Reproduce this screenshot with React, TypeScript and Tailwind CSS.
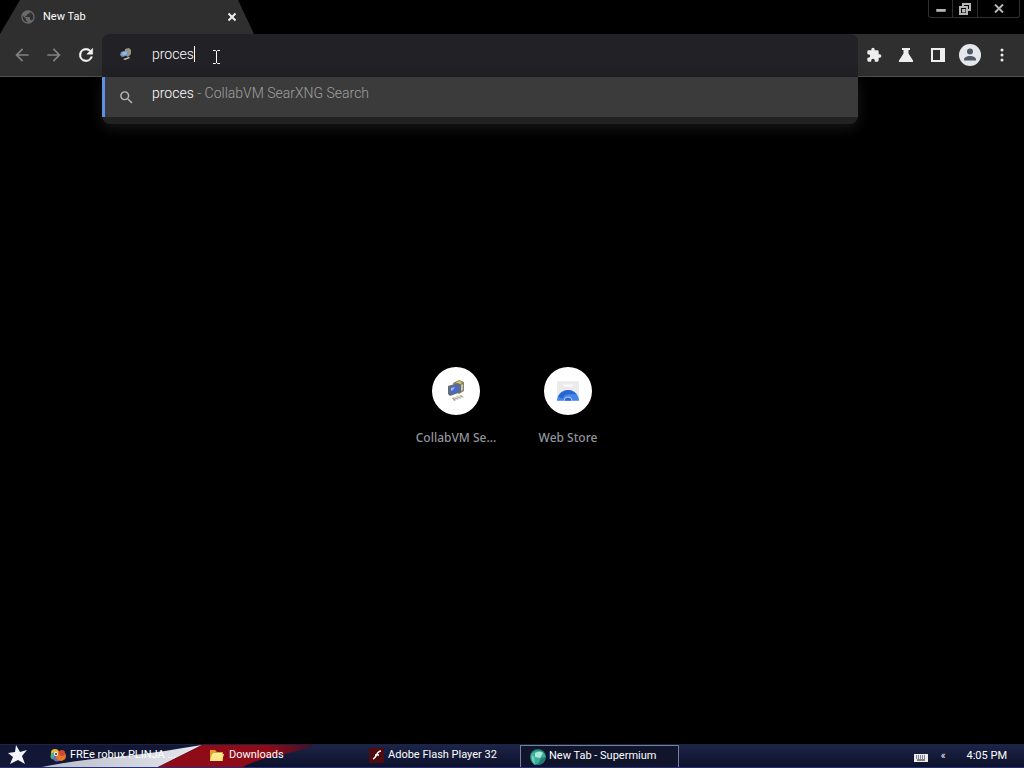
import type { ReactNode } from "react";
import { useState } from "react";

function GlobeIcon() {
  return (
    <svg viewBox="0 0 24 24" className="size-4 shrink-0" fill="#68696b" aria-hidden="true">
      <path d="M12 2C6.48 2 2 6.48 2 12s4.48 10 10 10 10-4.480 10-10S17.520 2 12 2zm-1 17.930c-3.950-.49-7-3.850-7-7.930 0-.62.08-1.210.21-1.790L9 15v1c0 1.100.9 2 2 2v1.930zm6.900-2.540c-.26-.81-1-1.390-1.900-1.390h-1v-3c0-.55-.45-1-1-1H8v-2h2c.55 0 1-.45 1-1V7h2c1.100 0 2-.9 2-2v-.41c2.930 1.190 5 4.060 5 7.410 0 2.080-.8 3.970-2.100 5.390z" />
    </svg>
  );
}

function MachineIcon({ className }: { className: string }) {
  return (
    <svg viewBox="0 0 20 22" className={className} aria-hidden="true">
      <path d="M7 3 L13 0 L18 2 L18 11 L13 14 L9 11Z" fill="#858267" />
      <path d="M10 2 L14 1 L16 3 L12 5Z" fill="#d4c76d" />
      <path d="M2 6 L12 3 L15 5 L15 12 L4 16 L2 14Z" fill="#656b77" />
      <path d="M4 8 L12 5 L13 11 L5 14Z" fill="#456bd2" />
      <path d="M5 8 L9 7 L7 10 L5 11Z" fill="#9bbdf0" />
      <path d="M15 5 L17 4 V10 L15 11Z" fill="#c5c5b6" />
      <path d="M6 18 L15 15 L18 17 L8 21Z" fill="#aaa999" />
      <path d="M8 18 L15 16 M9 20 L17 17" stroke="#e8e6d9" strokeWidth="1" />
    </svg>
  );
}

function SmallMachineIcon() {
  return (
    <svg viewBox="0 0 14 14" className="size-[14px] shrink-0" aria-hidden="true">
      <path d="M6 2 10 1 12 3v4L9 10 6 8z" fill="#9c9873" />
      <path d="M2 5 8 3l2 2v3l-7 2-2-2z" fill="#7e97b8" />
      <path d="M3 5.500 7.500 4.500 8 7 4 8.500z" fill="#8fb9e8" />
      <path d="M4 12 10 10l1 1-5 2z" fill="#c9c9bd" />
    </svg>
  );
}

function StoreIcon() {
  return (
    <svg viewBox="0 0 22 22" className="size-6" aria-hidden="true">
      <path d="M1 2h20v18H1z" fill="#ebebed" />
      <path d="M7 5h8v2H7z" fill="#fafafa" />
      <path d="M1 20a10 10 0 0 1 20 0z" fill="#4386e8" />
      <path d="M2 16a10 10 0 0 1 17-2H11a6 6 0 0 0-5 4z" fill="#2867d2" />
      <path d="M7 20a4 4 0 0 1 8 0z" fill="#b9d4fb" />
      <path d="M8 20a3 3 0 0 1 6 0z" fill="#2767d5" />
    </svg>
  );
}

function IconButton({ label, children }: { label: string; children: ReactNode }) {
  return (
    <button type="button" aria-label={label} className="flex w-8 items-center justify-center">
      {children}
    </button>
  );
}

function TabStrip() {
  return (
    <header className="flex h-[34px] shrink-0 items-start justify-between">
      <div className="flex h-full w-[254px] items-center bg-[#2f2f2f] pr-[14px] pl-5 [clip-path:polygon(20px_0,238px_0,100%_100%,0_100%)]">
        <GlobeIcon />
        <span className="ml-[7px] flex-1 text-[11px] text-white">New Tab</span>
        <button type="button" aria-label="Close tab" className="flex size-4 items-center justify-center">
          <svg viewBox="0 0 10 10" className="size-[10px]" stroke="#eeeeee" strokeWidth="2" aria-hidden="true">
            <path d="M1.500 1.500 8.500 8.500M8.500 1.500 1.500 8.500" />
          </svg>
        </button>
      </div>
      <div className="mr-1 flex h-[18px] rounded-b-[3px] border border-t-0 border-[#303030]">
        <button type="button" aria-label="Minimize" className="flex w-6 justify-center border-r border-[#303030]">
          <svg viewBox="0 0 10 18" className="h-[17px] w-[10px]" aria-hidden="true">
            <path d="M0 9.500h10v3H0z" fill="#b5b5b5" />
          </svg>
        </button>
        <button type="button" aria-label="Restore" className="flex w-6 justify-center pt-[3px]">
          <svg viewBox="0 0 12 12" className="size-3" fill="none" stroke="#b5b5b5" strokeWidth="2" aria-hidden="true">
            <path d="M4 3V1h7v6H9M1 4h7v7H1zM4 7h1.500v1.500H4z" />
          </svg>
        </button>
        <button type="button" aria-label="Close window" className="flex w-[42px] justify-center border-l border-[#303030] pt-1">
          <svg viewBox="0 0 10 9" className="h-[9px] w-[10px]" stroke="#b5b5b5" strokeWidth="2" aria-hidden="true">
            <path d="M1 0.500 9 8.500M9 0.500 1 8.500" />
          </svg>
        </button>
      </div>
    </header>
  );
}

function Omnibox() {
  const [query, setQuery] = useState("proces");
  return (
    <div className="relative z-10 h-[43px] min-w-0 flex-1 rounded-t-lg bg-[#222126]">
      <div className="flex h-full items-center pb-[3px] pl-[17px]">
        <SmallMachineIcon />
        <input
          aria-label="Search or enter address"
          value={query}
          onChange={(event) => setQuery(event.target.value)}
          className="ml-[19px] field-sizing-content bg-transparent p-0 font-[Roboto,sans-serif] text-sm font-light text-white outline-none"
        />
        <span className="h-4 w-px bg-white" />
        <svg viewBox="0 0 7 14" className="mt-[5px] ml-[18px] h-[14px] w-[7px]" fill="none" stroke="#ffffff" aria-hidden="true">
          <path d="M0 .5h2.500l1 1 1-1H7M3.500 1v12M0 13.500h2.500l1-1 1 1H7" />
        </svg>
      </div>
      <div className="absolute inset-x-0 top-full overflow-hidden rounded-b-lg bg-[#222222] pb-[7px] shadow-[0_4px_14px_#181818]">
        <a href="#search" className="flex h-10 items-center border-l-[3px] border-[#5b8fe8] bg-[#3b3b3b] pl-[13px]">
          <svg viewBox="0 0 24 24" className="size-[17px] shrink-0" fill="#b8b8b8" aria-hidden="true">
            <path d="M15.500 14h-.79l-.28-.27A6.470 6.470 0 0 0 16 9.500 6.500 6.500 0 1 0 9.500 16c1.610 0 3.090-.59 4.230-1.570l.27.28v.79l5 4.990L20.490 19l-4.990-5zm-6 0C7.010 14 5 11.990 5 9.500S7.010 5 9.500 5 14 7.010 14 9.500 11.990 14 9.500 14z" />
          </svg>
          <span className="ml-[17px] pb-2 font-[Roboto,sans-serif] text-sm font-light whitespace-pre text-white">
            proces<span className="text-[#a0a0a0]"> - CollabVM SearXNG Search</span>
          </span>
        </a>
      </div>
    </div>
  );
}

function Toolbar() {
  return (
    <nav className="flex h-[43px] shrink-0 border-b border-[#505050] bg-[#2f2f2f]">
      <div className="flex w-[102px] shrink-0 pl-[6px]">
        <IconButton label="Back">
          <svg viewBox="0 0 24 24" className="size-5" fill="#828282" aria-hidden="true">
            <path d="M20 11H7.830l5.590-5.590L12 4l-8 8 8 8 1.410-1.410L7.830 13H20v-2z" />
          </svg>
        </IconButton>
        <IconButton label="Forward">
          <svg viewBox="0 0 24 24" className="size-5" fill="#828282" aria-hidden="true">
            <path d="M12 4l-1.410 1.410L16.170 11H4v2h12.170l-5.580 5.590L12 20l8-8z" />
          </svg>
        </IconButton>
        <IconButton label="Reload">
          <svg viewBox="0 0 24 24" className="size-5" fill="#f4f4f4" stroke="#f4f4f4" strokeWidth=".6" aria-hidden="true">
            <path d="M17.650 6.350A7.960 7.960 0 0 0 12 4a8 8 0 1 0 7.730 10h-2.080A6 6 0 1 1 12 6c1.660 0 3.140.69 4.220 1.780L13 11h7V4l-2.350 2.350z" />
          </svg>
        </IconButton>
      </div>
      <Omnibox />
      <div className="flex w-[166px] shrink-0">
        <IconButton label="Extensions">
          <svg viewBox="0 0 24 24" className="size-4" fill="#eeeeee" aria-hidden="true">
            <path d="M20.500 11H19V7a2 2 0 0 0-2-2h-4V3.500a2.500 2.500 0 0 0-5 0V5H4a2 2 0 0 0-2 2v3.800h1.500a2.700 2.700 0 0 1 0 5.400H2V20a2 2 0 0 0 2 2h3.800v-1.500a2.700 2.700 0 0 1 5.400 0V22H17a2 2 0 0 0 2-2v-4h1.500a2.500 2.500 0 0 0 0-5z" />
          </svg>
        </IconButton>
        <IconButton label="Experiments">
          <svg viewBox="0 0 16 16" className="size-4" fill="#eeeeee" aria-hidden="true">
            <path d="M4 1h8v2h-1.500v3.500L15 13.500c.5 1-.1 1.500-1 1.500H2c-.9 0-1.500-.5-1-1.500l4.500-7V3H4z" />
          </svg>
        </IconButton>
        <IconButton label="Side panel">
          <svg viewBox="0 0 16 16" className="size-4" fill="#eeeeee" aria-hidden="true">
            <path fillRule="evenodd" d="M1 1h14v14H1zM3 3v10h7V3z" />
          </svg>
        </IconButton>
        <IconButton label="Profile">
          <svg viewBox="0 0 22 22" className="size-[22px]" aria-hidden="true">
            <circle cx="11" cy="11" r="11" fill="#e4e7ec" />
            <circle cx="11" cy="7.500" r="3" fill="#505866" />
            <path d="M5 16.500v-1c0-2 3-3.500 6-3.500s6 1.500 6 3.500v1z" fill="#505866" />
          </svg>
        </IconButton>
        <IconButton label="Menu">
          <svg viewBox="0 0 4 14" className="h-[14px] w-1" fill="#eeeeee" aria-hidden="true">
            <circle cx="2" cy="2" r="1.500" />
            <circle cx="2" cy="7" r="1.500" />
            <circle cx="2" cy="12" r="1.500" />
          </svg>
        </IconButton>
      </div>
    </nav>
  );
}

function Shortcut({ label, children }: { label: string; children: ReactNode }) {
  return (
    <a href="#shortcut" className="flex w-28 flex-col items-center gap-[13px]">
      <span className="flex size-12 items-center justify-center rounded-full bg-white">{children}</span>
      <span className="text-center font-['Noto_Sans',sans-serif] text-xs leading-5 font-medium text-[#92959a]">{label}</span>
    </a>
  );
}

function Task({ label, icon, active = false }: { label: string; icon: ReactNode; active?: boolean }) {
  return (
    <button
      type="button"
      className={`flex w-[159px] min-w-0 items-center overflow-hidden text-left text-[11px] whitespace-nowrap text-white ${
        active ? "gap-[3px] border-x border-t border-[#7380a0] bg-[#10152c] pl-[9px]" : "gap-1 pb-[2px] pl-[7px]"
      }`}
    >
      {icon}
      <span>{label}</span>
    </button>
  );
}

function Taskbar() {
  return (
    <footer className="relative flex h-6 shrink-0 overflow-hidden border-y border-t-[#1c2342] border-b-[#262f77] bg-linear-to-b from-[#1c2449] to-[#0c1129]">
      <svg viewBox="0 0 340 22" className="absolute top-0 left-0 h-[22px] w-[340px]" aria-hidden="true">
        <defs>
          <linearGradient id="stripe-red" x1="0" x2="1">
            <stop offset="0" stopColor="#8e0b17" />
            <stop offset=".7" stopColor="#8e0b17" />
            <stop offset="1" stopColor="#3c1028" />
          </linearGradient>
          <linearGradient id="stripe-white" x1="0" x2="1">
            <stop offset="0" stopColor="#b9bdc9" />
            <stop offset="1" stopColor="#e6e7ed" />
          </linearGradient>
        </defs>
        <path d="M0 0h200L44 22H0z" fill="#111735" />
        <path d="M42 22C72 16 91 14 125 11 155 8 176 4 202 0L158 22z" fill="url(#stripe-white)" />
        <path d="M202 0h114C285 11 262 11 243 22H158z" fill="url(#stripe-red)" />
      </svg>
      <div className="relative flex min-w-0 flex-1">
        <button type="button" aria-label="Start" className="flex w-[43px] shrink-0 items-center pb-[3px] pl-[7px]">
          <svg viewBox="0 0 22 22" className="size-[22px]" fill="#f4f4ff" aria-hidden="true">
            <path d="M9 1 13 8 20 6 15 12 18 20 11 16 3 20 6 13 1 9 8 8z" />
          </svg>
        </button>
        <Task
          label="FREe robux PLINJA ..."
          icon={
            <svg viewBox="0 0 16 16" className="size-4 shrink-0" aria-hidden="true">
              <circle cx="5" cy="6" r="4" fill="#edb834" />
              <circle cx="4" cy="9" r="3.500" fill="#4dae83" />
              <circle cx="7" cy="11" r="3.500" fill="#7664c4" />
              <circle cx="11" cy="9" r="5" fill="#e67824" />
              <circle cx="12" cy="6" r="3" fill="#d34631" />
              <circle cx="6" cy="7" r="2" fill="#ffffff" />
              <circle cx="6" cy="7" r="1" fill="#202020" />
            </svg>
          }
        />
        <Task
          label="Downloads"
          icon={
            <svg viewBox="0 0 16 16" className="size-4 shrink-0" aria-hidden="true">
              <path d="M1 3h5l2 2h6v9H1z" fill="#d9a52d" />
              <path d="M3 7h12l-2 7H1z" fill="#ffe78a" />
              <path d="M4 6h9v1H4z" fill="#fff6bd" />
            </svg>
          }
        />
        <Task
          label="Adobe Flash Player 32"
          icon={
            <svg viewBox="0 0 16 16" className="size-4 shrink-0" aria-hidden="true">
              <path d="M1 1h15v15H1z" fill="#500b10" />
              <path d="M13 4c-5 0-4 7-8 8M7 8h4" fill="none" stroke="#ffffff" strokeWidth="1.500" />
            </svg>
          }
        />
        <Task
          active
          label="New Tab - Supermium"
          icon={
            <svg viewBox="0 0 16 16" className="size-4 shrink-0" aria-hidden="true">
              <circle cx="8" cy="8" r="8" fill="#237b73" />
              <path d="M1 5Q6-1 13 3l3 5-5 1-2 5-4 2Q0 13 1 5z" fill="#3eae9a" />
              <path d="M5 4q5-3 8 0l-3 5-5-1z" fill="#a5e9d6" />
              <path d="M2 6v5l3 4-1-7z" fill="#71d5be" />
            </svg>
          }
        />
      </div>
      <div className="flex items-center pr-[17px] text-[11px] text-white">
        <svg viewBox="0 0 14 8" className="mt-[3px] h-2 w-[14px]" aria-hidden="true">
          <path d="M0 0h14v8H0z" fill="#ececec" />
          <path d="M2 2h10M2 4h10" stroke="#15172b" strokeDasharray="1 1" />
          <path d="M3 6h8" stroke="#15172b" />
        </svg>
        <button type="button" aria-label="Show hidden icons" className="ml-3 w-[7px] text-[10px] leading-3">«</button>
        <time className="ml-5">4:05 PM</time>
      </div>
    </footer>
  );
}

export default function App() {
  return (
    <div className="flex h-screen flex-col overflow-hidden bg-black font-[Roboto,'Noto_Sans',sans-serif]">
      <TabStrip />
      <Toolbar />
      <main className="flex flex-1 items-center justify-center pb-[6px]">
        <div className="flex">
          <Shortcut label="CollabVM Se...">
            <MachineIcon className="h-[22px] w-5" />
          </Shortcut>
          <Shortcut label="Web Store">
            <StoreIcon />
          </Shortcut>
        </div>
      </main>
      <Taskbar />
    </div>
  );
}
